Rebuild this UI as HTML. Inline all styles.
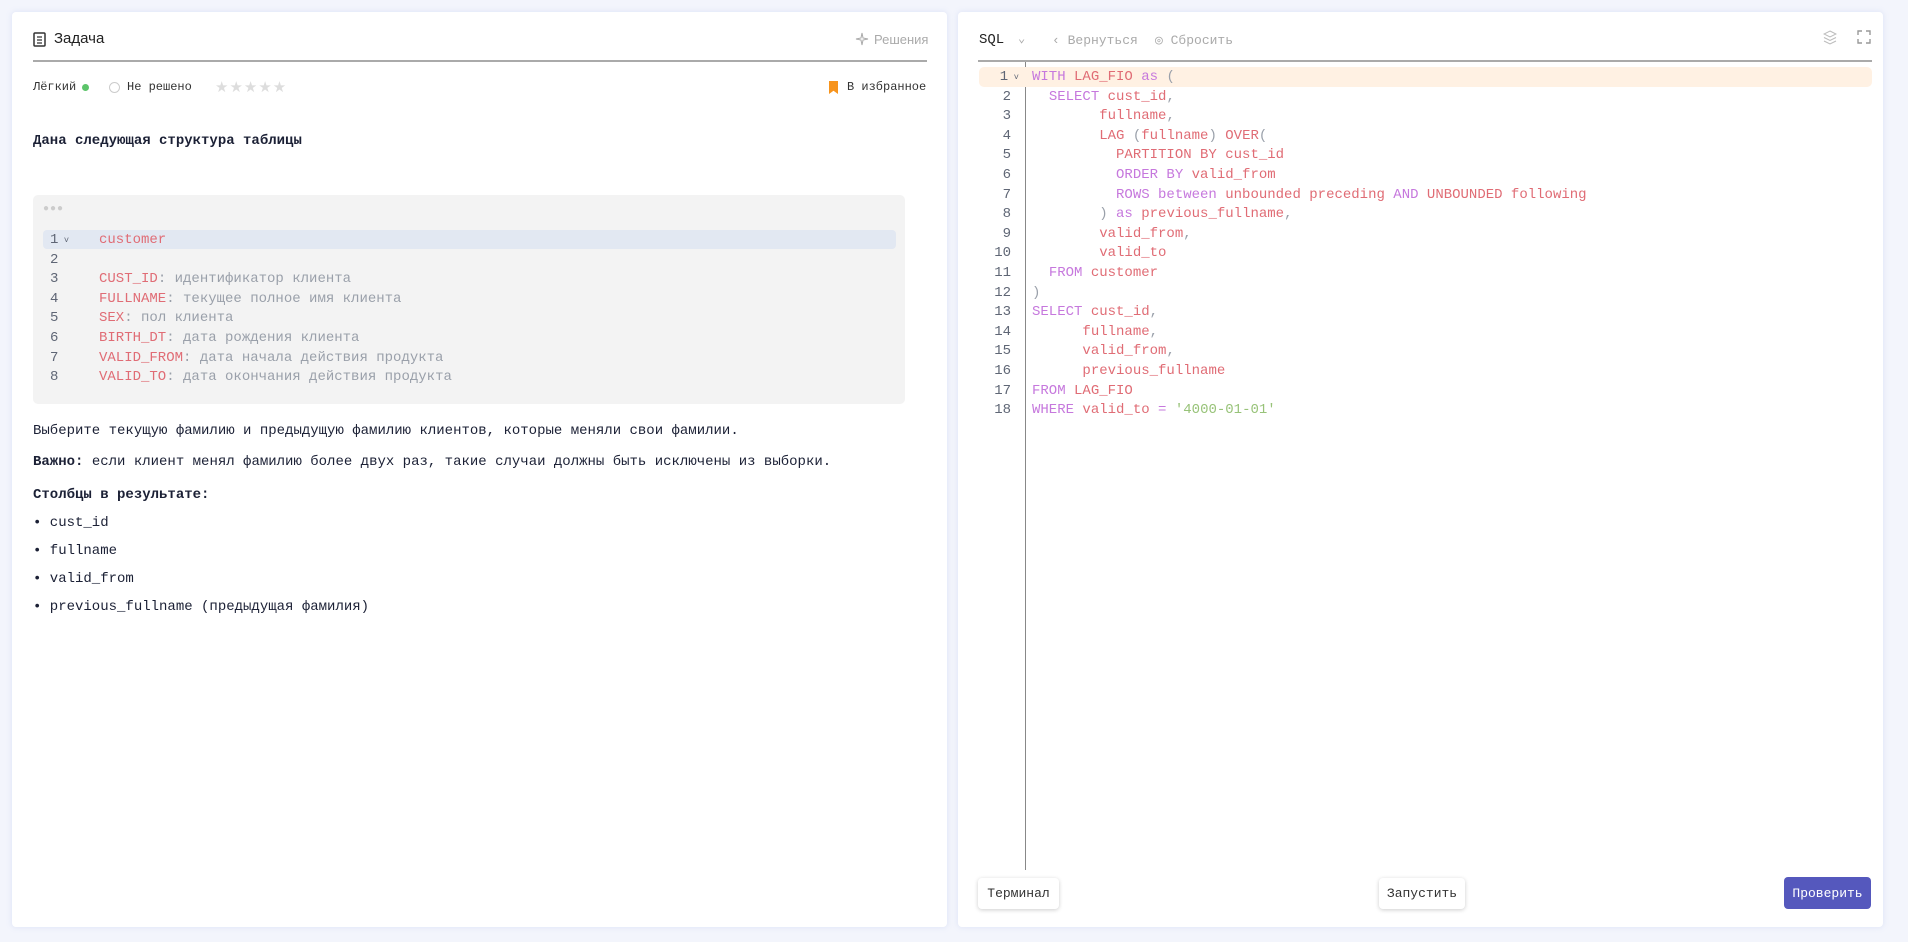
<!DOCTYPE html>
<html><head><meta charset="utf-8"><style>
*{box-sizing:border-box;margin:0;padding:0}
body{width:1908px;height:942px;background:#f3f5fc;position:relative;overflow:hidden;font-family:"Liberation Mono","DejaVu Sans Mono",monospace;color:#1b2035}
.p{position:absolute;background:#fff;border-radius:4px;box-shadow:0 0 6px rgba(150,170,230,.25)}
.a{position:absolute;white-space:pre}
.sans{font-family:"Liberation Sans","DejaVu Sans",sans-serif}
.k{color:#c678dd}.r{color:#e06c75}.g{color:#98c379}.gr{color:#9aa0aa}
.btn{position:absolute;background:#fff;border-radius:4px;box-shadow:0 1px 4px rgba(0,0,0,.2);font-size:13px;display:flex;align-items:center;justify-content:center;color:#333}
</style></head><body>
<div class="p" style="left:12px;top:12px;width:935px;height:915px"></div>
<div class="p" style="left:958px;top:12px;width:925px;height:915px"></div>

<svg class="a" style="left:33px;top:32px" width="14" height="15" viewBox="0 0 14 15"><rect x="1" y="1" width="11" height="13" fill="none" stroke="#333" stroke-width="1.5" rx="1"/><path d="M4 5h5M4 8h5M4 11h5" stroke="#333" stroke-width="1.3"/></svg>
<div class="a sans" style="left:54px;top:30px;font-size:15px;color:#222">Задача</div>
<div class="a sans" style="left:874px;top:32px;font-size:13px;color:#aaa">Решения</div>
<svg class="a" style="left:855px;top:32px" width="14" height="14" viewBox="0 0 14 14"><path d="M7 1L8 6 13 7 8 8 7 13 6 8 1 7 6 6Z" fill="none" stroke="#aaa" stroke-width="1"/></svg>
<div class="a" style="left:33px;top:60px;width:894px;height:2px;background:#aaa"></div>
<div class="a" style="left:33px;top:80px;font-size:12px;color:#333">Лёгкий</div>
<div class="a" style="left:82px;top:84px;width:7px;height:7px;border-radius:50%;background:#5cc46a"></div>
<div class="a" style="left:109px;top:82px;width:11px;height:11px;border-radius:50%;border:1px solid #ccc"></div>
<div class="a" style="left:127px;top:80px;font-size:12px;color:#333">Не решено</div>
<div class="a sans" style="left:215px;top:78px;font-size:15px;color:#ddd;letter-spacing:1px">★★★★★</div>
<div class="a" style="left:829px;top:81px;width:9px;height:13px;background:#f7941d;clip-path:polygon(0 0,100% 0,100% 100%,50% 75%,0 100%)"></div>
<div class="a" style="left:847px;top:80px;font-size:12px;color:#333">В избранное</div>
<div class="a" style="left:33px;top:133px;font-size:14px;font-weight:bold">Дана следующая структура таблицы</div>

<div class="a" style="left:33px;top:195px;width:872px;height:209px;background:#f3f3f3;border-radius:5px"></div>
<div class="a" style="left:43px;top:204px;font-size:10px;color:#ccc;letter-spacing:1px">●●●</div>
<div class="a" style="left:43px;top:230px;width:853px;height:19px;background:#e2e8f2;border-radius:4px"></div>
<div style="position:absolute;left:0;top:231px;font-size:14px;line-height:19.6px">
<div class="a" style="left:50px;top:0;color:#5f6675">1<span style="font-size:9px"> ˅</span></div>
<div class="a" style="left:50px;top:19.6px;color:#5f6675">2
3
4
5
6
7
8</div>
<div class="a r" style="left:99px;top:0">customer</div>
<div class="a" style="left:99px;top:39.2px"><span class="r">CUST_ID</span><span class="gr">: идентификатор клиента</span>
<span class="r">FULLNAME</span><span class="gr">: текущее полное имя клиента</span>
<span class="r">SEX</span><span class="gr">: пол клиента</span>
<span class="r">BIRTH_DT</span><span class="gr">: дата рождения клиента</span>
<span class="r">VALID_FROM</span><span class="gr">: дата начала действия продукта</span>
<span class="r">VALID_TO</span><span class="gr">: дата окончания действия продукта</span></div>
</div>

<div class="a" style="left:33px;top:423px;font-size:14px">Выберите текущую фамилию и предыдущую фамилию клиентов, которые меняли свои фамилии.</div>
<div class="a" style="left:33px;top:454px;font-size:14px"><b>Важно:</b> если клиент менял фамилию более двух раз, такие случаи должны быть исключены из выборки.</div>
<div class="a" style="left:33px;top:487px;font-size:14px;font-weight:bold">Столбцы в результате:</div>
<div class="a" style="left:33px;top:515px;font-size:14px">• cust_id</div>
<div class="a" style="left:33px;top:543px;font-size:14px">• fullname</div>
<div class="a" style="left:33px;top:571px;font-size:14px">• valid_from</div>
<div class="a" style="left:33px;top:599px;font-size:14px">• previous_fullname (предыдущая фамилия)</div>

<div class="a" style="left:979px;top:32px;font-size:14px;color:#222">SQL</div>
<div class="a" style="left:1018px;top:31px;font-size:12px;color:#aaa">⌄</div>
<div class="a" style="left:1052px;top:33px;font-size:13px;color:#aaa">‹ Вернуться</div>
<div class="a" style="left:1155px;top:33px;font-size:13px;color:#aaa">◎ Сбросить</div>
<svg class="a" style="left:1823px;top:30px" width="14" height="16" viewBox="0 0 14 16"><path d="M7 1L13 4 7 7 1 4Z M1 7.5L7 10.5 13 7.5 M1 11L7 14 13 11" fill="none" stroke="#bbb" stroke-width="1"/></svg>
<svg class="a" style="left:1857px;top:30px" width="14" height="14" viewBox="0 0 14 14"><path d="M1 5V1h4M9 1h4v4M13 9v4H9M5 13H1V9" fill="none" stroke="#999" stroke-width="1.4"/></svg>
<div class="a" style="left:978px;top:60px;width:894px;height:2px;background:#aaa"></div>
<div class="a" style="left:1025px;top:62px;width:1px;height:808px;background:#888"></div>
<div class="a" style="left:979px;top:67px;width:893px;height:20px;background:#fff1e3;border-radius:5px"></div>

<div style="position:absolute;left:0;top:68px;font-size:14px;line-height:19.6px">
<div class="a" style="left:979px;top:0;width:40px;text-align:right;color:#5f6675">1<span style="font-size:9px"> ˅</span></div>
<div class="a" style="left:975px;top:19.6px;width:36px;text-align:right;color:#5f6675">2
3
4
5
6
7
8
9
10
11
12
13
14
15
16
17
18</div>
<div class="a" style="left:1032px;top:0"><span class="k">WITH</span> <span class="r">LAG_FIO</span> <span class="k">as</span> <span class="gr">(</span>
  <span class="k">SELECT</span> <span class="r">cust_id</span><span class="gr">,</span>
        <span class="r">fullname</span><span class="gr">,</span>
        <span class="r">LAG</span> <span class="gr">(</span><span class="r">fullname</span><span class="gr">)</span> <span class="r">OVER</span><span class="gr">(</span>
          <span class="r">PARTITION BY cust_id</span>
          <span class="k">ORDER BY</span> <span class="r">valid_from</span>
          <span class="k">ROWS between</span> <span class="r">unbounded preceding</span> <span class="k">AND</span> <span class="r">UNBOUNDED following</span>
        <span class="gr">)</span> <span class="k">as</span> <span class="r">previous_fullname</span><span class="gr">,</span>
        <span class="r">valid_from</span><span class="gr">,</span>
        <span class="r">valid_to</span>
  <span class="k">FROM</span> <span class="r">customer</span>
<span class="gr">)</span>
<span class="k">SELECT</span> <span class="r">cust_id</span><span class="gr">,</span>
      <span class="r">fullname</span><span class="gr">,</span>
      <span class="r">valid_from</span><span class="gr">,</span>
      <span class="r">previous_fullname</span>
<span class="k">FROM</span> <span class="r">LAG_FIO</span>
<span class="k">WHERE</span> <span class="r">valid_to</span> <span class="k">=</span> <span class="g">'4000-01-01'</span></div>
</div>

<div class="btn" style="left:978px;top:878px;width:81px;height:31px">Терминал</div>
<div class="btn" style="left:1379px;top:878px;width:86px;height:31px">Запустить</div>
<div class="btn" style="left:1784px;top:877px;width:87px;height:32px;background:#5558bd;color:#fff;box-shadow:none">Проверить</div>
</body></html>
